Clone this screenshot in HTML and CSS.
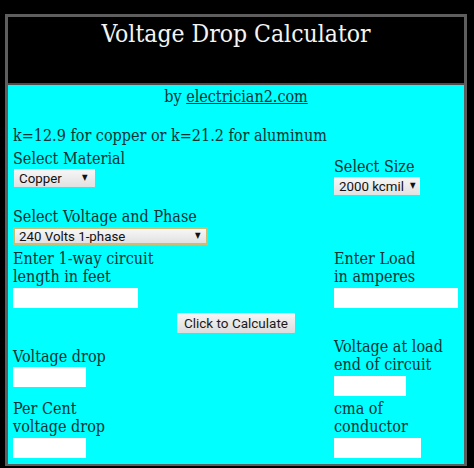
FILE: index.html
```html
<!DOCTYPE html>
<html lang="en">
<head>
    <meta charset="UTF-8">
    <meta name="viewport" content="width=device-width, initial-scale=1.0">
    <title>Voltage Drop Calculator</title>
    <link rel="stylesheet" href="styles.css">
</head>
<body>

    <div class="calc">
        <div class="head">
            <h1>Voltage Drop Calculator</h1>
        </div>

        <div class="body">
            <p class="by">by <a href="#">electrician2.com</a></p>
            <p class="kline">k=12.9 for copper or k=21.2 for aluminum</p>

            <!-- Material and size -->
            <div class="row top">
                <div class="cell left">
                    <div class="label">Select Material</div>
                    <span class="pick copper"><select><option>Copper</option><option>Aluminum</option></select></span>
                </div>
                <div class="cell right low">
                    <div class="label">Select Size</div>
                    <span class="pick size"><select><option>2000 kcmil</option></select></span>
                </div>
            </div>

            <div class="row volt-row">
                <div class="cell left">
                    <div class="label">Select Voltage and Phase</div>
                    <span class="pick volts"><select><option>240 Volts 1-phase</option></select></span>
                </div>
            </div>

            <!-- Inputs -->
            <div class="row in-row">
                <div class="cell left">
                    <div class="label">Enter 1-way circuit<br>length in feet</div>
                    <input type="text" class="box w125">
                </div>
                <div class="cell right">
                    <div class="label">Enter Load<br>in amperes</div>
                    <input type="text" class="box w124">
                </div>
            </div>

            <div class="go">
                <button type="button">Click to Calculate</button>
            </div>

            <!-- Results -->
            <div class="row out-row mid">
                <div class="cell left">
                    <div class="label">Voltage drop</div>
                    <input type="text" class="box w73 tight">
                </div>
                <div class="cell right">
                    <div class="label">Voltage at load<br>end of circuit</div>
                    <input type="text" class="box w72">
                </div>
            </div>

            <div class="row last-row">
                <div class="cell left">
                    <div class="label">Per Cent<br>voltage drop</div>
                    <input type="text" class="box w73">
                </div>
                <div class="cell right">
                    <div class="label">cma of<br>conductor</div>
                    <input type="text" class="box w87">
                </div>
            </div>
        </div>
    </div>

</body>
</html>
```

FILE: styles.css
```css
body {
    margin: 0;
    padding: 14px 0 0 5px;
    background-color: #000;
    font-family: "DejaVu Serif", serif;
    font-stretch: condensed;
    font-size: 16px;
    line-height: 18px;
    color: #0a3434;
}

.calc {
    width: 456px;
    border: 3px solid #5e5e5e;
    border-bottom-width: 2px;
}

.head {
    height: 66px;
    background-color: #000;
    border-bottom: 2px solid #4e4e4e;
}

.head h1 {
    margin: 0;
    padding-top: 1px;
    text-align: center;
    font-weight: normal;
    font-size: 24.5px;
    line-height: 32px;
    color: #f4f4f4;
}

.body {
    background-color: #00ffff;
    padding: 3px 5px 6px 5px;
}

p {
    margin: 0;
}

.by {
    text-align: center;
}

.by a {
    color: inherit;
}

.kline {
    margin-top: 21px;
}

.row {
    display: flex;
    align-items: flex-start;
}

.row.mid {
    align-items: center;
}

.cell.left {
    width: 321px;
}

.cell.right {
    flex: 1;
}

.top {
    margin-top: 5px;
}

.low {
    margin-top: 8px;
}

.volt-row {
    margin-top: 13px;
}

.in-row {
    margin-top: 5px;
}

.out-row {
    margin-top: 5px;
}

.last-row {
    margin-top: 4px;
}

/* dropdowns */
.pick {
    position: relative;
    display: block;
    margin-top: 1px;
    height: 18px;
}

.pick select {
    appearance: none;
    -webkit-appearance: none;
    display: block;
    height: 18px;
    margin: 0;
    padding: 0 0 0 5px;
    border: none;
    border-radius: 0;
    background: linear-gradient(#f7f7f7, #e1e1e1);
    font-family: Roboto, sans-serif;
    font-stretch: normal;
    font-size: 13.3px;
    color: #111;
}

.pick::after {
    content: "\25BC";
    position: absolute;
    top: 4px;
    font-family: "DejaVu Sans", sans-serif;
    font-size: 8px;
    line-height: 10px;
    color: #111;
    pointer-events: none;
}

.copper {
    margin-left: 1px;
}

.copper select {
    width: 81px;
}

.copper::after {
    left: 68px;
}

.size select {
    width: 86px;
}

.size::after {
    left: 76px;
}

.volts select {
    width: 195px;
    border: 2px solid #cdbd72;
    padding-left: 4px;
}

.volts::after {
    left: 182px;
}

/* text boxes */
.box {
    display: block;
    box-sizing: border-box;
    height: 20px;
    margin: 2px 0 0 0;
    padding: 0;
    border: none;
    background-color: #fff;
}

.box.tight {
    margin-top: 1px;
}

.w125 { width: 125px; }
.w124 { width: 124px; }
.w73 { width: 73px; }
.w72 { width: 72px; }
.w87 { width: 87px; }

.go {
    margin-top: 5px;
    text-align: center;
}

.go button {
    width: 118px;
    height: 20px;
    padding: 0;
    border: none;
    border-radius: 1px;
    background: linear-gradient(#f6f6f6, #dcdcdc);
    font-family: Roboto, sans-serif;
    font-stretch: normal;
    font-size: 13.5px;
    color: #1a1a1a;
}
```
